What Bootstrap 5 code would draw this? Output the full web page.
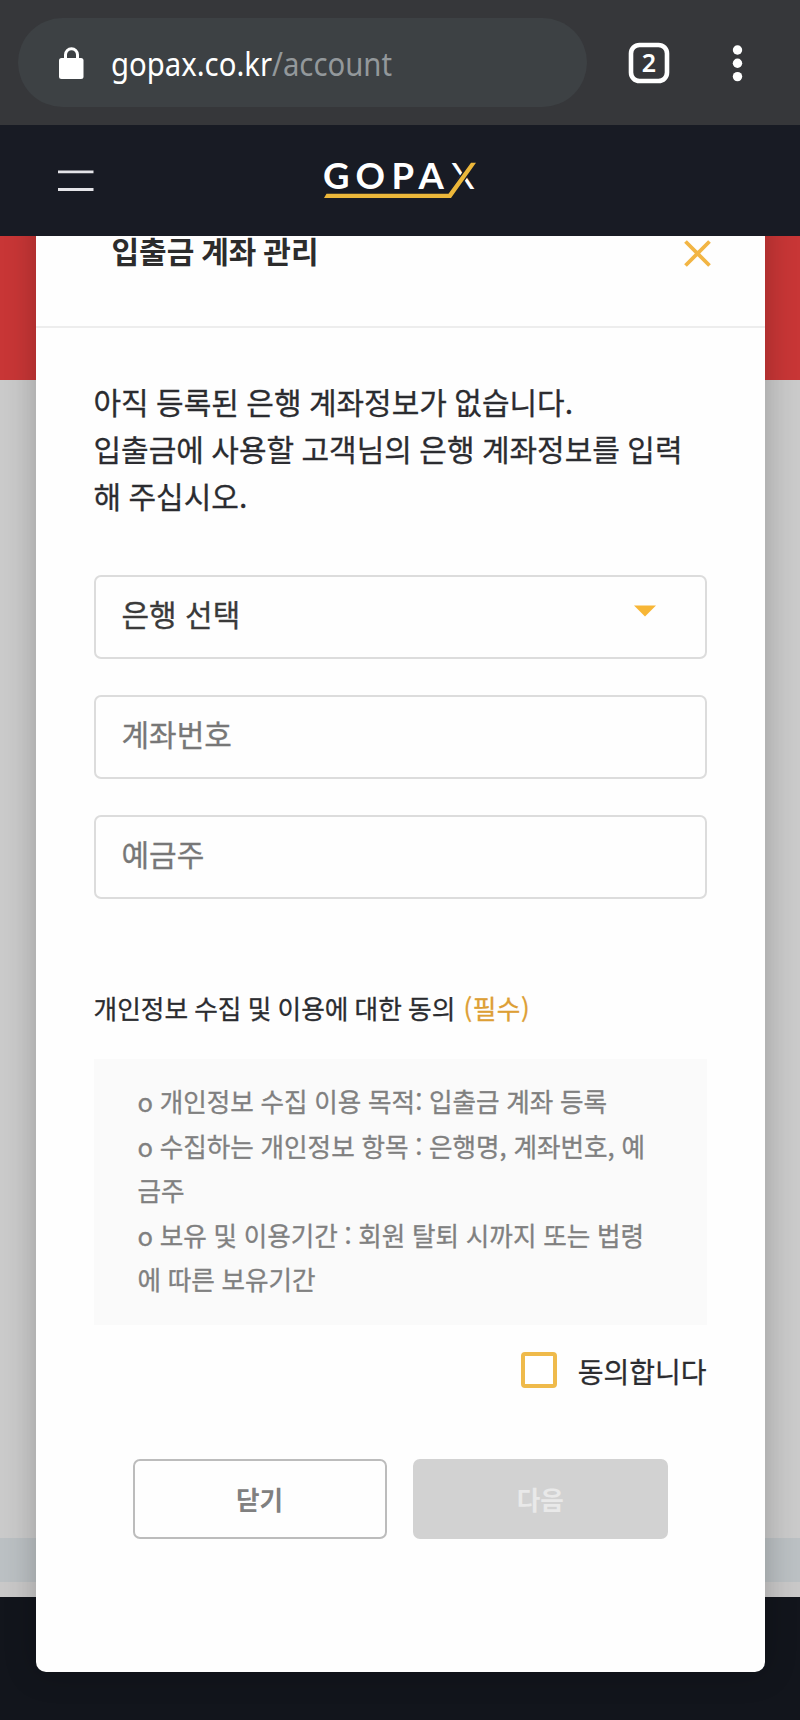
<!DOCTYPE html>
<html lang="ko">
<head>
<meta charset="utf-8">
<meta name="viewport" content="width=device-width, initial-scale=1">
<title>입출금 계좌 관리</title>
<link href="https://cdn.jsdelivr.net/npm/bootstrap@5.3.0/dist/css/bootstrap.min.css" rel="stylesheet">
<style>
  body { font-family: "Noto Sans CJK KR", sans-serif; color: #2b2c30; height: 1720px; overflow: hidden; background: #12151c; }
  .browser-bar { height: 125px; background: #36373a; padding: 18px 57px 18px 18px; }
  .url-pill { width: 569px; height: 89px; background: #3d4144; padding-left: 41px; }
  .url-text { font: 400 32px/1 "Noto Sans", sans-serif; color: #fff; transform-origin: 0 50%; transform: scaleX(.916); white-space: nowrap; margin: 3px 0 0 27px; }
  .url-text .path { color: #93989b; }
  .site-nav { height: 111px; background: #181b24; padding: 0 57px; z-index: 2; }
  .wordmark { margin: -8px 0 0 229px; overflow: visible; }
  .page { height: 1484px; overflow: hidden;
    background: linear-gradient(#c83636 0 144.5px, #cacaca 144.5px 1302px, #bbc0c3 1302px 1346px, #c9c8c8 1346px 1361.5px, #12151c 1361.5px); }
  .sheet { width: 729px; height: 1466px; margin: -30px 0 0 35.5px; background: #fefefe; border-radius: 10px; box-shadow: 0 0 32px rgba(0,0,0,.24); }
  .sheet-head { height: 122px; border-bottom: 2px solid #ededed; padding: 22px 53.5px 0 76px; }
  .sheet-head h1 { font-size: 30px; line-height: 44px; font-weight: 700; color: #2c2c2c; word-spacing: -1.5px; }
  .sheet-body { padding: 50px 58px 0 58px; }
  .intro { font-size: 30px; line-height: 47px; margin-bottom: 56px; word-break: break-all; word-spacing: -1px; -webkit-text-stroke: .3px; }
  .field { height: 84px; border: 2px solid #dcdcdc; border-radius: 7px; background: #fefefe; padding: 0 49px 8px 26px; font-size: 30px; color: #3a3a3a; -webkit-text-stroke: .3px; }
  .field::placeholder { color: #777; opacity: 1; }
  .stack { gap: 36px; }
  .consent-title { font-size: 25.7px; line-height: 40px; margin: 89px 0 31px; word-spacing: -1px; -webkit-text-stroke: .3px; }
  .required { color: #dd9f35; margin-left: 2px; letter-spacing: .5px; }
  .terms { background: #fafafa; height: 266px; padding: 20px 40px 0 44px; font-size: 25.6px; line-height: 44.5px; color: #808080; word-break: break-all; word-spacing: -.5px; -webkit-text-stroke: .3px; }
  .agree { margin-top: 25px; font-size: 28px; line-height: 36px; gap: 21px; -webkit-text-stroke: .3px; }
  .agree .agree-text { padding-top: 3px; }
  .tick { width: 36px; height: 36px; border: 4px solid #efba4b; border-radius: 4px; background: #fff; }
  .actions { padding: 0 39px; margin-top: 70px; gap: 26.5px; }
  .actions .btn { height: 80px; border-radius: 7px; font-size: 25.6px; font-weight: 700; padding: 0; border: 2px solid #bcbcbc; color: #808080; background: #fefefe; }
  .actions .btn-next { background: #d2d2d2; border-color: #d2d2d2; color: #e9e9e9; opacity: 1; }
</style>
</head>
<body>
<header class="browser-bar d-flex align-items-center">
  <div class="url-pill rounded-pill d-flex align-items-center">
    <svg width="25" height="32" viewBox="0 0 25 32" aria-hidden="true">
      <path d="M6.5 12V7.800a6 6 0 0 1 12 0V12" fill="none" stroke="#fff" stroke-width="3"/>
      <rect x="0" y="11" width="24.5" height="21" rx="2.5" fill="#fff"/>
    </svg>
    <div class="url-text">gopax.co.kr<span class="path">/account</span></div>
  </div>
  <svg class="ms-auto" width="42" height="42" viewBox="0 0 42 42">
    <rect x="3" y="3" width="36" height="36" rx="8.5" fill="none" stroke="#fff" stroke-width="4.6"/>
    <text x="21" y="30" text-anchor="middle" font-family="Noto Sans" font-weight="600" font-size="25" fill="#fff">2</text>
  </svg>
  <svg width="10" height="38" viewBox="0 0 10 38" style="margin-left:63px" overflow="visible" aria-hidden="true">
    <g fill="#fff"><circle cx="4.5" cy="6" r="4.7"/><circle cx="4.5" cy="19.3" r="4.7"/><circle cx="4.5" cy="32.6" r="4.7"/></g>
  </svg>
</header>

<nav class="site-nav position-relative d-flex align-items-center">
  <svg width="37" height="24" viewBox="0 0 37 24" aria-hidden="true"><path d="M1 2.800H36.500M1 20.500H36.500" stroke="#e4e4e8" stroke-width="2.800"/></svg>
  <svg class="wordmark" width="160" height="44" viewBox="0 0 160 44">
    <text x="0 32.5 68.5 95.5" y="34" font-family="Lato" font-weight="700" font-size="36.5" fill="#fff">GOPA<tspan x="128" font-weight="400">X</tspan></text>
    <path d="M1.500 40.800H126.500L150.500 8" fill="none" stroke="#181b24" stroke-width="7"/>
    <path d="M1 43L3.500 38.700H125.500L148 7.800H153L128 43z" fill="#ecb73a"/>
  </svg>
</nav>

<main class="page">
  <section class="sheet">
    <div class="sheet-head d-flex justify-content-between align-items-start">
      <h1 class="m-0">입출금 계좌 관리</h1>
      <svg width="27" height="27" viewBox="0 0 27 27" style="margin-top:12px" aria-label="닫기"><path d="M1.500 1.500l24 24M25.500 1.500l-24 24" stroke="#f2b544" stroke-width="3.800"/></svg>
    </div>
    <div class="sheet-body">
      <p class="intro">아직 등록된 은행 계좌정보가 없습니다.<br>입출금에 사용할 고객님의 은행 계좌정보를 입력해 주십시오.</p>
      <div class="stack d-flex flex-column">
        <div class="field form-control d-flex align-items-center justify-content-between" role="combobox">
          <span>은행 선택</span>
          <svg width="22" height="12" viewBox="0 0 22 12" style="margin-top:-4px" aria-hidden="true"><path d="M0 0.500H22L11 11.500z" fill="#f7b636"/></svg>
        </div>
        <input class="field form-control" type="text" placeholder="계좌번호">
        <input class="field form-control" type="text" placeholder="예금주">
      </div>
      <div class="consent-title">개인정보 수집 및 이용에 대한 동의 <span class="required">(필수)</span></div>
      <div class="terms">o 개인정보 수집 이용 목적: 입출금 계좌 등록<br>o 수집하는 개인정보 항목 : 은행명, 계좌번호, 예<br>금주<br>o 보유 및 이용기간 : 회원 탈퇴 시까지 또는 법령<br>에 따른 보유기간</div>
      <label class="agree d-flex align-items-center justify-content-end"><span class="tick"></span><span class="agree-text">동의합니다</span></label>
      <div class="actions d-flex">
        <button class="btn flex-fill w-50" type="button">닫기</button>
        <button class="btn btn-next flex-fill w-50" type="button" disabled>다음</button>
      </div>
    </div>
  </section>
</main>
<script src="https://cdn.jsdelivr.net/npm/bootstrap@5.3.0/dist/js/bootstrap.bundle.min.js"></script>
</body>
</html>
